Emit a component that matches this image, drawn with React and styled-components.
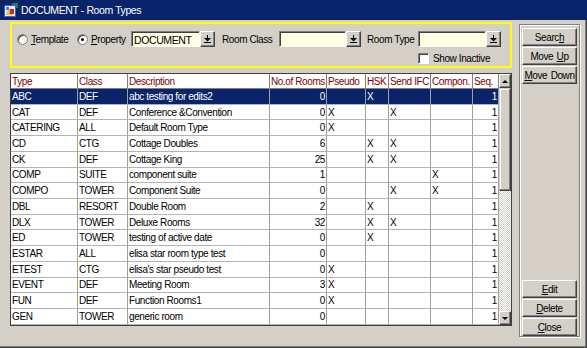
import React from 'react';
import styled, { createGlobalStyle } from 'styled-components';

const Global = createGlobalStyle`
  html, body { margin: 0; padding: 0; background: #d4d0c8; }
  body {
    font-family: "Liberation Sans", Arial, sans-serif;
    font-size: 10px;
    letter-spacing: -0.4px;
    color: #000;
  }
  * { box-sizing: border-box; }
`;

const Window = styled.div`
  width: 587px;
  height: 348px;
  display: flex;
  flex-direction: column;
  background: #d4d0c8;
  overflow: hidden;
`;

const TitleBar = styled.div`
  height: 20px;
  flex: none;
  background: #0a246a;
  color: #fff;
  display: flex;
  align-items: center;
  gap: 3px;
  padding-left: 3px;
  font-size: 10.5px;
`;

const Body = styled.div`
  flex: 1;
  display: flex;
  align-items: flex-start;
  padding: 2px 0 0 10px;
  box-shadow: inset -1px -1px 0 #404040, inset -2px -2px 0 #808080;
`;

const LeftCol = styled.div`
  width: 502px;
  display: flex;
  flex-direction: column;
`;

const FilterBox = styled.div`
  height: 46px;
  border: 2px solid #ffff00;
  padding: 7px 0 0 5px;
  display: flex;
  flex-direction: column;
`;

const FieldRow = styled.div`
  display: flex;
  align-items: center;
  height: 16px;
  margin-top: ${p => p.$mt || 0}px;
  padding-left: ${p => p.$pl || 0}px;
`;

const RadioLabel = styled.label`
  display: flex;
  align-items: center;
  gap: 1px;
  width: ${p => p.$w}px;
  flex: none;
`;

const Radio = styled.span`
  width: 11px;
  height: 11px;
  border-radius: 50%;
  background: #fff;
  border: 1px solid #808080;
  box-shadow: inset 1px 1px 0 #404040;
  position: relative;
  margin-right: 2px;
  flex: none;
  &::after {
    content: '';
    display: ${p => (p.$on ? 'block' : 'none')};
    position: absolute;
    width: 3px;
    height: 3px;
    border-radius: 50%;
    background: #000;
    left: 3px;
    top: 3px;
  }
`;

const Acc = styled.span`
  text-decoration: underline;
`;

const Label = styled.span`
  width: ${p => p.$w}px;
  margin-left: ${p => p.$ml || 0}px;
  flex: none;
  white-space: nowrap;
`;

const Input = styled.div`
  width: ${p => p.$w}px;
  height: 16px;
  flex: none;
  background: #ffffe1;
  border-top: 1px solid #808080;
  border-left: 1px solid #808080;
  border-right: 1px solid #fff;
  border-bottom: 1px solid #fff;
  box-shadow: inset 1px 1px 0 #404040;
  display: flex;
  align-items: center;
  padding-left: 2px;
  padding-top: 1px;
  font-size: 10.5px;
`;

const DropBtn = styled.div`
  width: 15px;
  height: 16px;
  flex: none;
  background: #d4d0c8;
  border-top: 1px solid #fff;
  border-left: 1px solid #fff;
  border-right: 1px solid #404040;
  border-bottom: 1px solid #404040;
  box-shadow: inset -1px -1px 0 #808080;
  display: flex;
  align-items: center;
  justify-content: center;
`;

const CheckLabel = styled.label`
  display: flex;
  align-items: center;
  gap: 4px;
  margin-left: ${p => p.$ml}px;
`;

const Check = styled.span`
  width: 11px;
  height: 11px;
  background: #fff;
  border: 1px solid #808080;
  box-shadow: inset 1px 1px 0 #404040;
  border-right-color: #fff;
  border-bottom-color: #fff;
  flex: none;
`;

const TableFrame = styled.div`
  margin-top: 5px;
  width: 502px;
  height: 253px;
  border: 1px solid #404040;
  background: #fff;
  display: flex;
  overflow: hidden;
`;

const Grid = styled.div`
  width: 488px;
  display: flex;
  flex-direction: column;
`;

const COLS = '67px 50px 142px 57px 39px 23px 42px 42px 26px';

const HeadRow = styled.div`
  display: grid;
  grid-template-columns: ${COLS};
  height: 15px;
  flex: none;
`;

const HeadCell = styled.div`
  border-right: 1px solid #808080;
  border-bottom: 1px solid #808080;
  color: #800000;
  padding: 0 1px;
  display: flex;
  align-items: center;
  white-space: nowrap;
  overflow: hidden;
`;

const Row = styled.div`
  display: grid;
  grid-template-columns: ${COLS};
  height: 15.73px;
  flex: none;
  background: ${p => (p.$sel ? '#0a246a' : '#fff')};
  color: ${p => (p.$sel ? '#fff' : '#000')};
`;

const Cell = styled.div`
  border-right: 1px solid #a0a0a0;
  border-bottom: 1px solid #b4b4b4;
  padding: 0 1px;
  display: flex;
  align-items: center;
  justify-content: ${p => (p.$right ? 'flex-end' : 'flex-start')};
  white-space: nowrap;
  overflow: hidden;
`;

const ScrollBar = styled.div`
  width: 12px;
  display: flex;
  flex-direction: column;
  background: #d4d0c8;
`;

const ScrollBtn = styled.div`
  height: 14px;
  flex: none;
  background: #d4d0c8;
  border-top: 1px solid #fff;
  border-left: 1px solid #fff;
  border-right: 1px solid #404040;
  border-bottom: 1px solid #404040;
  box-shadow: inset -1px -1px 0 #808080;
  display: flex;
  align-items: center;
  justify-content: center;
`;

const Arrow = styled.span`
  width: 0;
  height: 0;
  border-left: 3px solid transparent;
  border-right: 3px solid transparent;
  ${p => (p.$up ? 'border-bottom: 3px solid #000;' : 'border-top: 3px solid #000;')}
`;

const Thumb = styled.div`
  height: 103px;
  flex: none;
  background: #d4d0c8;
  border-top: 1px solid #d4d0c8;
  border-left: 1px solid #d4d0c8;
  border-right: 1px solid #404040;
  border-bottom: 1px solid #404040;
  box-shadow: inset -1px -1px 0 #808080, inset 1px 1px 0 #fff;
`;

const Track = styled.div`
  flex: 1;
  background: repeating-conic-gradient(#d4d0c8 0 25%, #fff 0 50%) 0 0 / 2px 2px;
`;

const Panel = styled.div`
  margin-left: 7px;
  margin-top: 2px;
  width: 61px;
  height: 313px;
  border: 1px solid #808080;
  box-shadow: inset 1px 1px 0 #fff, 1px 1px 0 #fff;
  padding: 3px 2px 0 2px;
  display: flex;
  flex-direction: column;
  justify-content: space-between;
`;

const BtnGroup = styled.div`
  display: flex;
  flex-direction: column;
  gap: 1px;
`;

const Button = styled.div`
  width: 55px;
  height: 18px;
  background: #d4d0c8;
  border-top: 1px solid #fff;
  border-left: 1px solid #fff;
  border-right: 1px solid #404040;
  border-bottom: 1px solid #404040;
  box-shadow: inset -1px -1px 0 #808080;
  display: flex;
  align-items: center;
  justify-content: center;
  white-space: pre;
  word-spacing: 1px;
`;

const DropGlyph = () => (
  <svg width="7" height="8" viewBox="0 0 7 8">
    <rect x="3" y="0" width="1" height="3" fill="#000" />
    <polygon points="0,3 7,3 3.5,6.5" fill="#000" />
    <rect x="0" y="7" width="7" height="1" fill="#000" />
  </svg>
);

const AppIcon = () => (
  <svg width="15" height="15" viewBox="0 0 15 15">
    <rect x="1" y="2" width="12" height="12" fill="#3a5fcd" />
    <rect x="2" y="3" width="10" height="10" fill="#e8e8f8" />
    <polygon points="3,12 6,5 9,12" fill="#e8c020" />
    <rect x="7" y="6" width="4" height="5" fill="#d02020" />
    <rect x="3" y="4" width="3" height="3" fill="#4080e0" />
    <path d="M9 1 L14 1 L14 5" stroke="#20a040" strokeWidth="1.5" fill="none" />
  </svg>
);

const rows = [
  ['ABC', 'DEF', 'abc testing for edits2', '0', '', 'X', '', '', '1'],
  ['CAT', 'DEF', 'Conference &Convention', '0', 'X', '', 'X', '', '1'],
  ['CATERING', 'ALL', 'Default Room Type', '0', 'X', '', '', '', '1'],
  ['CD', 'CTG', 'Cottage Doubles', '6', '', 'X', 'X', '', '1'],
  ['CK', 'DEF', 'Cottage King', '25', '', 'X', 'X', '', '1'],
  ['COMP', 'SUITE', 'component suite', '1', '', '', '', 'X', '1'],
  ['COMPO', 'TOWER', 'Component Suite', '0', '', '', 'X', 'X', '1'],
  ['DBL', 'RESORT', 'Double Room', '2', '', 'X', '', '', '1'],
  ['DLX', 'TOWER', 'Deluxe Rooms', '32', '', 'X', 'X', '', '1'],
  ['ED', 'TOWER', 'testing of active date', '0', '', 'X', '', '', '1'],
  ['ESTAR', 'ALL', 'elisa star room type test', '0', '', '', '', '', '1'],
  ['ETEST', 'CTG', "elisa's star pseudo test", '0', 'X', '', '', '', '1'],
  ['EVENT', 'DEF', 'Meeting Room', '3', 'X', '', '', '', '1'],
  ['FUN', 'DEF', 'Function Rooms1', '0', 'X', '', '', '', '1'],
  ['GEN', 'TOWER', 'generic room', '0', '', '', '', '', '1'],
];

const headers = ['Type', 'Class', 'Description', 'No.of Rooms', 'Pseudo', 'HSK', 'Send IFC', 'Compon.', 'Seq.'];
const rightCols = [3, 8];

export default function App() {
  return (
    <>
      <Global />
      <Window>
        <TitleBar>
          <AppIcon />
          <span>DOCUMENT - Room Types</span>
        </TitleBar>
        <Body>
          <LeftCol>
            <FilterBox>
              <FieldRow>
                <RadioLabel $w={60}>
                  <Radio />
                  <span><Acc>T</Acc>emplate</span>
                </RadioLabel>
                <RadioLabel $w={54}>
                  <Radio $on />
                  <span><Acc>P</Acc>roperty</span>
                </RadioLabel>
                <Input $w={69}>DOCUMENT</Input>
                <DropBtn><DropGlyph /></DropBtn>
                <Label $ml={7} $w={57}>Room Class</Label>
                <Input $w={67} />
                <DropBtn><DropGlyph /></DropBtn>
                <Label $ml={6} $w={51}>Room Type</Label>
                <Input $w={68} />
                <DropBtn><DropGlyph /></DropBtn>
              </FieldRow>
              <FieldRow $mt={4}>
                <CheckLabel $ml={401}>
                  <Check />
                  <span>Show Inactive</span>
                </CheckLabel>
              </FieldRow>
            </FilterBox>
            <TableFrame>
              <Grid>
                <HeadRow>
                  {headers.map(h => (
                    <HeadCell key={h}>{h}</HeadCell>
                  ))}
                </HeadRow>
                {rows.map((r, i) => (
                  <Row key={r[0]} $sel={i === 0}>
                    {r.map((v, j) => (
                      <Cell key={j} $right={rightCols.includes(j)}>{v}</Cell>
                    ))}
                  </Row>
                ))}
              </Grid>
              <ScrollBar>
                <ScrollBtn><Arrow $up /></ScrollBtn>
                <Thumb />
                <Track />
                <ScrollBtn><Arrow /></ScrollBtn>
              </ScrollBar>
            </TableFrame>
          </LeftCol>
          <Panel>
            <BtnGroup>
              <Button>Searc<Acc>h</Acc></Button>
              <Button>{'Move '}<Acc>U</Acc>p</Button>
              <Button><Acc>M</Acc>ove Down</Button>
            </BtnGroup>
            <BtnGroup>
              <Button><Acc>E</Acc>dit</Button>
              <Button><Acc>D</Acc>elete</Button>
              <Button><Acc>C</Acc>lose</Button>
            </BtnGroup>
          </Panel>
        </Body>
      </Window>
    </>
  );
}
